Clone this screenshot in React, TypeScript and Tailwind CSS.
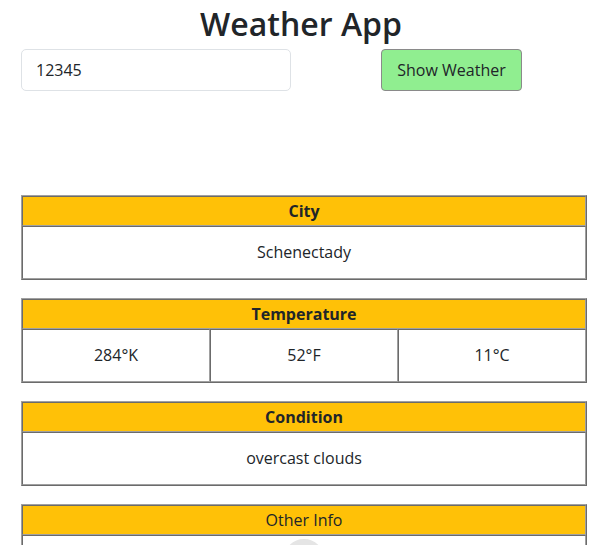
import React from 'react';

const font = { fontFamily: '"Open Sans", "Liberation Sans", sans-serif' };

const cell = 'border border-t-[#6b6b6b] border-l-[#6b6b6b] border-r-[#a0a0a0] border-b-[#a0a0a0]';

function InfoTable({ title, values, boldTitle = true, children }: { title: string; values?: string[]; boldTitle?: boolean; children?: React.ReactNode }) {
  return (
    <div className="w-[566px] h-[85px] flex flex-col border border-t-[#a0a0a0] border-l-[#a0a0a0] border-r-[#6b6b6b] border-b-[#6b6b6b]">
      <div className={`h-[30px] flex items-center justify-center bg-[#ffc107] text-[16px] text-[#212529] ${cell} ${boldTitle ? 'font-bold' : 'font-normal'}`}>
        {title}
      </div>
      <div className="flex h-[53px]">
        {values
          ? values.map((v) => (
              <div key={v} className={`flex-1 flex items-center justify-center pb-px text-[16px] text-[#212529] ${cell}`}>
                {v}
              </div>
            ))
          : <div className={`flex-1 flex justify-center ${cell}`}>{children}</div>}
      </div>
    </div>
  );
}

export default function App() {
  return (
    <div className="w-[602px] h-[545px] overflow-hidden bg-white text-[#212529]" style={font}>
      <h1 className="text-center text-[32px] leading-[48px] font-semibold">Weather App</h1>

      <div className="flex items-center mt-px pl-[21px]">
        <input
          defaultValue="12345"
          className="w-[270px] h-[42px] px-[14px] rounded-[5px] border border-[#dee2e6] text-[16px] text-[#212529] outline-none"
        />
        <button className="ml-[90px] w-[141px] h-[42px] rounded-[4px] border border-[#8a8a8a] bg-[#90ee90] text-[16px] text-[#212529]">
          Show Weather
        </button>
      </div>

      <div className="mt-[104px] pl-[21px] flex flex-col gap-[18px]">
        <InfoTable title="City" values={['Schenectady']} />
        <InfoTable title="Temperature" values={['284°K', '52°F', '11°C']} />
        <InfoTable title="Condition" values={['overcast clouds']} />
        <InfoTable title="Other Info" boldTitle={false}>
          <div className="mt-[3px] w-[40px] h-[40px] rounded-full border-[6px] border-[#e5e5e5]" />
        </InfoTable>
      </div>
    </div>
  );
}
